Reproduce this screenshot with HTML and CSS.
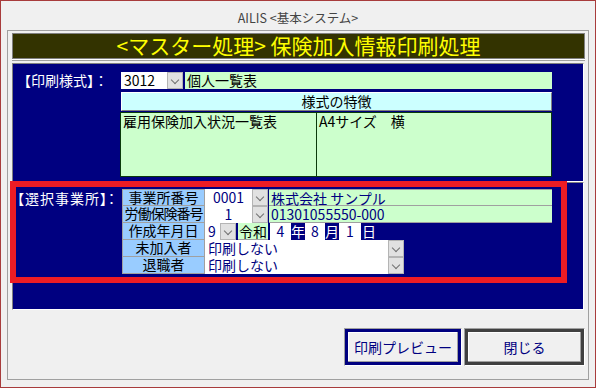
FILE: index.html
```html
<!DOCTYPE html>
<html lang="ja">
<head>
  <meta charset="UTF-8" />
  <title>AILIS &lt;基本システム&gt;</title>
  <link rel="stylesheet" href="styles.css">
</head>
<body>
  <div class="window">
    <div class="caption">AILIS &lt;基本システム&gt;</div>
    <div class="frame">
      <div class="banner">&lt;マスター処理&gt; 保険加入情報印刷処理</div>

      <section class="panel panel-style">
        <div class="panel-label">【印刷様式】：</div>
        <div class="style-body">
          <div class="style-row">
            <div class="box white w46 left">3012</div>
            <div class="drop"></div>
            <div class="box green grow">個人一覧表</div>
          </div>
          <div class="list-head">様式の特徴</div>
          <div class="list">
            <div class="list-col name">雇用保険加入状況一覧表</div>
            <div class="list-col">A4サイズ　横</div>
          </div>
        </div>
      </section>

      <section class="panel panel-office">
        <div class="panel-label wide">【選択事業所】：</div>
        <div class="office">
          <div class="office-row">
            <div class="office-label">事業所番号</div>
            <div class="box white w47 navy">0001</div>
            <div class="drop"></div>
            <div class="box green grow navy left gap1">株式会社 サンプル</div>
          </div>
          <div class="office-row">
            <div class="office-label tight">労働保険番号</div>
            <div class="box white w47 navy">1</div>
            <div class="drop"></div>
            <div class="box green grow navy left gap1">01301055550-000</div>
          </div>
          <div class="office-row">
            <div class="office-label">作成年月日</div>
            <div class="box white w15 navy left">9</div>
            <div class="drop"></div>
            <div class="box green w30 gap2">令和</div>
            <div class="box white w21 navy gap2">4</div>
            <div class="unit">年</div>
            <div class="box white w20 navy">8</div>
            <div class="unit">月</div>
            <div class="box white w22 navy">1</div>
            <div class="unit gap1">日</div>
          </div>
          <div class="office-row">
            <div class="office-label">未加入者</div>
            <div class="box white w183 navy left">印刷しない</div>
            <div class="drop"></div>
          </div>
          <div class="office-row">
            <div class="office-label">退職者</div>
            <div class="box white w183 navy left">印刷しない</div>
            <div class="drop"></div>
          </div>
        </div>
      </section>

      <div class="actions">
        <button class="btn btn-preview">印刷プレビュー</button>
        <button class="btn btn-close">閉じる</button>
      </div>

      <div class="highlight"></div>
    </div>
  </div>
</body>
</html>
```

FILE: styles.css
```css
* {
  box-sizing: border-box;
}
body {
  margin: 0;
  background: #fff;
  font-family: "Noto Sans CJK JP", "Liberation Sans", sans-serif;
  font-size: 14px;
  color: #000;
}
.window {
  width: 596px;
  height: 388px;
  border: 1px solid #a83c3c;
  background: #f0f0f0;
}
.caption {
  height: 29px;
  padding-top: 9px;
  text-align: center;
  font-size: 12.5px;
  line-height: 16px;
  color: #444;
}
.frame {
  position: relative;
  margin: 0 6px;
  height: 350px;
  border: 1px solid #a0a0a0;
  padding: 2px 3px 0 4px;
}
.banner {
  height: 26px;
  margin-bottom: 4px;
  border: 1px solid #808080;
  box-shadow: 0 1px 0 #fff, 0 2px 0 #a0a0a0;
  background: #333300;
  color: #ffff00;
  font-size: 21px;
  line-height: 22px;
  text-align: center;
}
.panel {
  display: flex;
  margin-right: 1px;
  background: #000080;
  border: 1px solid;
  border-color: #808080 #fff #fff #808080;
}
.panel-style {
  height: 119px;
  padding-top: 8px;
}
.panel-office {
  height: 128px;
  padding-top: 6px;
}
.panel-label {
  width: 107px;
  padding-left: 4px;
  color: #fff;
  line-height: 17px;
  white-space: nowrap;
}
.panel-label.wide {
  width: 109px;
  padding-top: 1px;
  font-feature-settings: "palt";
  letter-spacing: 1px;
}
.style-body {
  width: 432px;
}
.style-row {
  display: flex;
  height: 17px;
  margin-left: 1px;
}
.box {
  height: 17px;
  line-height: 16px;
  text-align: center;
  white-space: nowrap;
}
.white {
  background: #fff;
}
.green {
  background: #ccffcc;
}
.navy {
  color: #000080;
}
.left {
  text-align: left;
  padding-left: 3px;
}
.grow {
  flex: 1;
  text-align: left;
  padding-left: 2px;
}
.style-row .green {
  margin-left: 2px;
}
.gap1 {
  margin-left: 1px;
}
.gap2 {
  margin-left: 2px;
}
.w15 { width: 15px; }
.w20 { width: 20px; }
.w21 { width: 21px; }
.w22 { width: 22px; }
.w30 { width: 30px; }
.w46 { width: 46px; }
.w47 { width: 47px; }
.w183 { width: 183px; }
.drop {
  display: flex;
  align-items: center;
  justify-content: center;
  width: 16px;
  height: 17px;
  background: #e1e1e1;
  border: 1px solid #b4b4b4;
}
.drop::after {
  content: "";
  width: 5px;
  height: 5px;
  margin-top: -2px;
  border-right: 1px solid #707070;
  border-bottom: 1px solid #707070;
  transform: rotate(45deg);
}
.list-head {
  height: 19px;
  margin: 3px 0 0 1px;
  background: #ccffff;
  border: 1px solid;
  border-color: #fff #808080 #808080 #fff;
  line-height: 16px;
  text-align: center;
}
.list {
  display: flex;
  height: 65px;
  margin-top: 1px;
  background: #ccffcc;
  border: 1px solid #0a3a0a;
}
.list-col {
  padding: 0 2px;
  line-height: 17px;
}
.list-col.name {
  width: 196px;
  border-right: 1px solid #0a3a0a;
}
.office {
  width: 430px;
}
.office-row {
  display: flex;
  height: 17px;
}
.office-label {
  width: 83px;
  height: 17px;
  background: #99ccff;
  border: 1px solid #a0a0a0;
  border-top: none;
  line-height: 15px;
  text-align: center;
  white-space: nowrap;
}
.office-label.tight {
  letter-spacing: -1px;
}
.office-row:first-child .office-label {
  border-top: 1px solid #a0a0a0;
}
.office-row .green {
  border-bottom: 1px solid #a0a0a0;
}
.office-row:first-child .green {
  border-top: 1px solid #a0a0a0;
}
.unit {
  width: 14px;
  height: 17px;
  line-height: 16px;
  color: #fff;
  text-align: center;
}
.actions {
  display: flex;
  justify-content: flex-end;
  gap: 2px;
  margin-top: 18px;
}
.btn {
  height: 38px;
  background: #f0f0f0;
  border: 1px solid;
  border-color: #a0a0a0 #fff #fff #a0a0a0;
  color: #000080;
  font-family: inherit;
  font-size: 14px;
  padding: 0;
}
.btn-preview {
  width: 118px;
  box-shadow: inset 0 0 0 3px #000080, inset -4px -4px 0 #a0a0a0, inset 4px 4px 0 #fff;
}
.btn-close {
  width: 121px;
  box-shadow: inset 0 0 0 3px #404040, inset -4px -4px 0 #a0a0a0, inset 4px 4px 0 #fff;
}
.highlight {
  position: absolute;
  left: 2px;
  top: 150px;
  width: 557px;
  height: 102px;
  border: 6px solid #ed1c24;
}
```
